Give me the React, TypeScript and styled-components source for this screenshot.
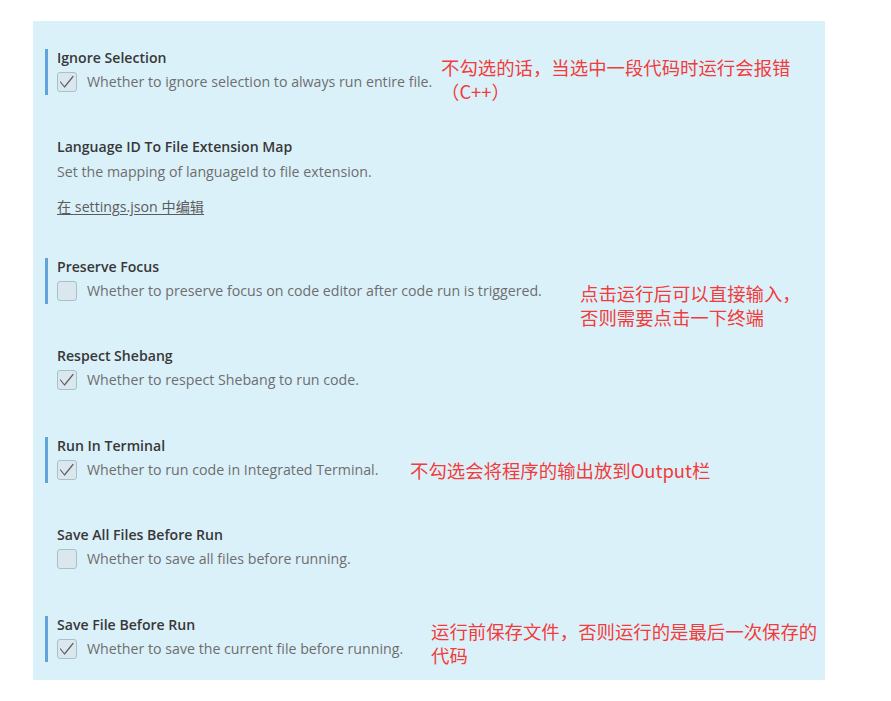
import React from "react";
import styled, { createGlobalStyle } from "styled-components";

const Global = createGlobalStyle`
  html, body { margin: 0; padding: 0; background: #ffffff; }
  body { font-family: "Open Sans", "Noto Sans CJK SC", sans-serif; }
`;

const Page = styled.div`
  padding: 21px 0 0 33px;
  height: 680px;
  box-sizing: border-box;
`;

const Panel = styled.div`
  width: 792px;
  height: 661px;
  box-sizing: border-box;
  background: #dbf1fa;
  padding: 27.5px 0 0 12px;
`;

const Item = styled.div<{ $modified?: boolean; $gap?: number }>`
  position: relative;
  border-left: 3px solid ${(p) => (p.$modified ? "#62a3d9" : "transparent")};
  padding: 0 0 3px 9px;
  margin-bottom: ${(p) => p.$gap ?? 43.5}px;
`;

const Title = styled.div`
  font-family: "Open Sans", sans-serif;
  font-weight: 600;
  font-size: 14.1px;
  line-height: 18px;
  color: #383838;
`;

const Row = styled.div`
  display: flex;
  align-items: center;
  gap: 10px;
  margin-top: 5px;
  height: 20px;
`;

const Box = styled.span`
  width: 20px;
  height: 20px;
  box-sizing: border-box;
  border: 1px solid #a6c0cd;
  border-radius: 3px;
  background: #dae8ee;
  display: flex;
  align-items: center;
  justify-content: center;
  flex: none;
`;

const Desc = styled.div<{ $mt?: number }>`
  font-family: "Open Sans", sans-serif;
  font-size: 14.2px;
  line-height: 20px;
  color: #6e6e6e;
  margin-top: ${(p) => p.$mt ?? 0}px;
`;

const Link = styled.div`
  font-family: "Open Sans", "Noto Sans CJK SC", sans-serif;
  font-size: 14.2px;
  line-height: 20px;
  color: #5c5c5c;
  text-decoration: underline;
  text-underline-offset: 2px;
  margin-top: 15px;
`;

const Note = styled.div<{ $left: number; $top: number }>`
  position: absolute;
  left: ${(p) => p.$left}px;
  top: ${(p) => p.$top}px;
  font-family: "Noto Sans CJK SC", sans-serif;
  font-size: 18.4px;
  line-height: 23.5px;
  color: #f23b3b;
  white-space: nowrap;
`;

const Check = () => (
  <svg width="16" height="16" viewBox="0 0 16 16" fill="none">
    <polyline
      points="1.5,8 5.5,13 14,2.5"
      stroke="#5a6166"
      strokeWidth="1.2"
      strokeLinecap="round"
      strokeLinejoin="round"
    />
  </svg>
);

type Setting = {
  title: string;
  desc: string;
  checked: boolean;
  modified: boolean;
  note?: { left: number; top: number; lines: string[] };
};

const settings: Setting[] = [
  {
    title: "Ignore Selection",
    desc: "Whether to ignore selection to always run entire file.",
    checked: true,
    modified: true,
    note: { left: 393, top: 7.5, lines: ["不勾选的话，当选中一段代码时运行会报错", "（C++）"] },
  },
];

const rest: Setting[] = [
  {
    title: "Preserve Focus",
    desc: "Whether to preserve focus on code editor after code run is triggered.",
    checked: false,
    modified: true,
    note: { left: 532, top: 24.5, lines: ["点击运行后可以直接输入，", "否则需要点击一下终端"] },
  },
  {
    title: "Respect Shebang",
    desc: "Whether to respect Shebang to run code.",
    checked: true,
    modified: false,
  },
  {
    title: "Run In Terminal",
    desc: "Whether to run code in Integrated Terminal.",
    checked: true,
    modified: true,
    note: { left: 362, top: 22.5, lines: ["不勾选会将程序的输出放到Output栏"] },
  },
  {
    title: "Save All Files Before Run",
    desc: "Whether to save all files before running.",
    checked: false,
    modified: false,
  },
  {
    title: "Save File Before Run",
    desc: "Whether to save the current file before running.",
    checked: true,
    modified: true,
    note: { left: 383, top: 4.5, lines: ["运行前保存文件，否则运行的是最后一次保存的", "代码"] },
  },
];

const BoolItem = ({ s }: { s: Setting }) => (
  <Item $modified={s.modified}>
    <Title>{s.title}</Title>
    <Row>
      <Box>{s.checked && <Check />}</Box>
      <Desc>{s.desc}</Desc>
    </Row>
    {s.note && (
      <Note $left={s.note.left} $top={s.note.top}>
        {s.note.lines.map((l, i) => (
          <div key={i}>{l}</div>
        ))}
      </Note>
    )}
  </Item>
);

export default function App() {
  return (
    <>
      <Global />
      <Page>
        <Panel>
          {settings.map((s) => (
            <BoolItem key={s.title} s={s} />
          ))}
          <Item $gap={37.5}>
            <Title>Language ID To File Extension Map</Title>
            <Desc $mt={6}>Set the mapping of languageId to file extension.</Desc>
            <Link>在 settings.json 中编辑</Link>
          </Item>
          {rest.map((s) => (
            <BoolItem key={s.title} s={s} />
          ))}
        </Panel>
      </Page>
    </>
  );
}
